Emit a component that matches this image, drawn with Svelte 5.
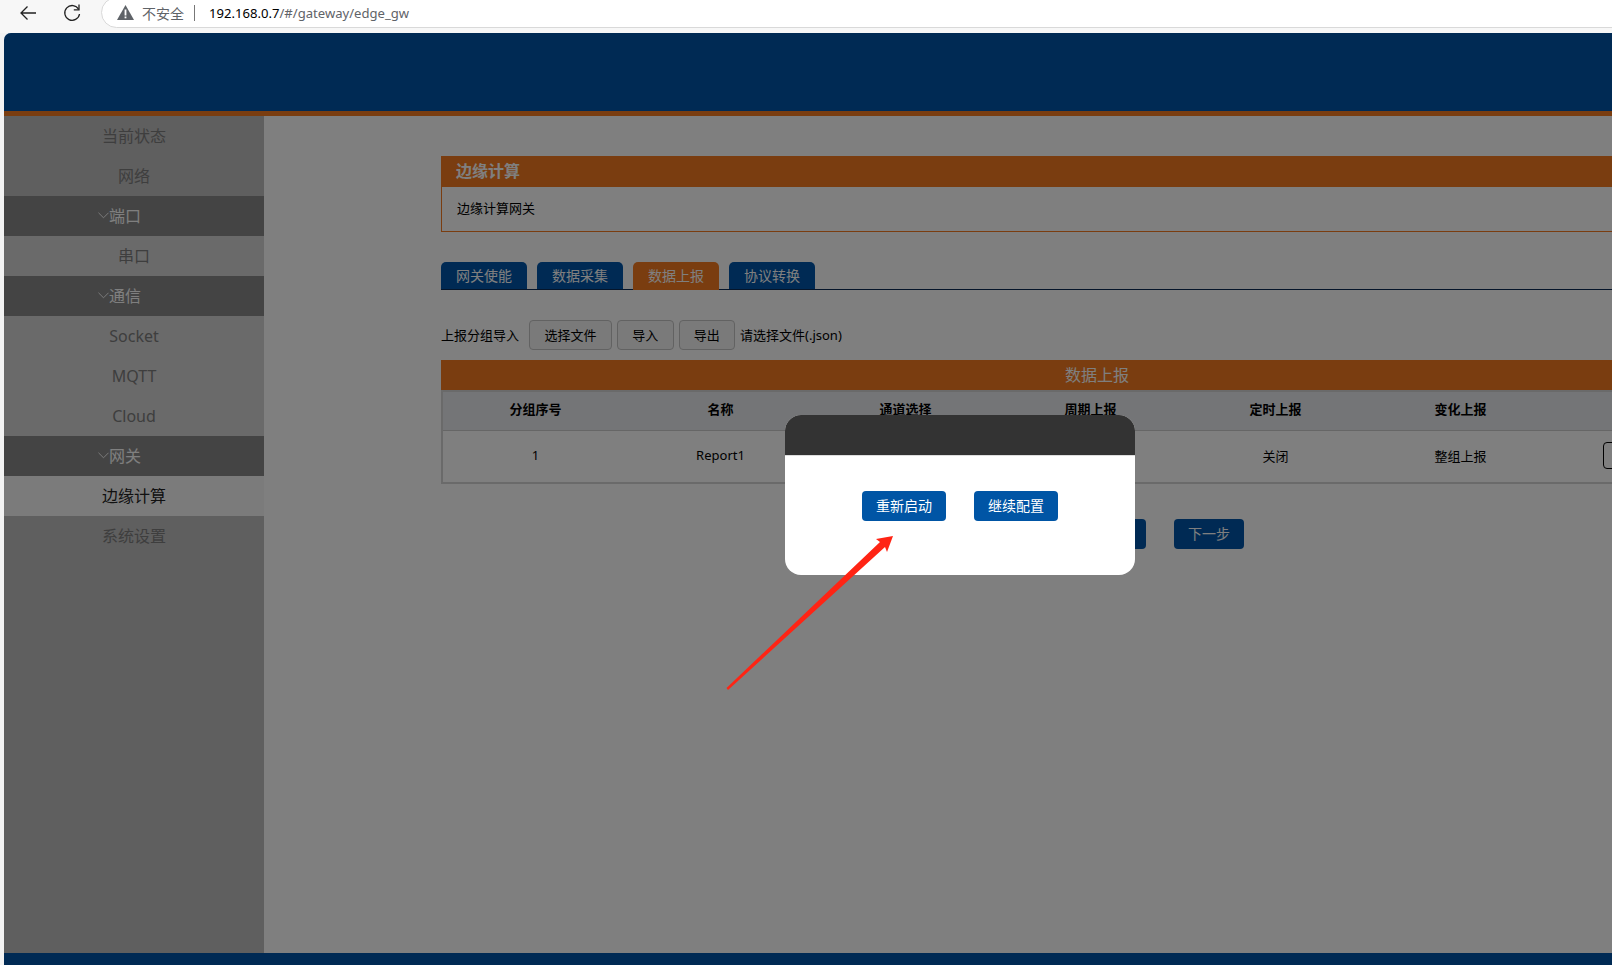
<script>
  const navItems = [
    { label: "当前状态", kind: "lead" },
    { label: "网络", kind: "lead" },
    { label: "端口", kind: "group" },
    { label: "串口", kind: "sub" },
    { label: "通信", kind: "group" },
    { label: "Socket", kind: "sub latin" },
    { label: "MQTT", kind: "sub latin" },
    { label: "Cloud", kind: "sub latin" },
    { label: "网关", kind: "group" },
    { label: "边缘计算", kind: "active" },
    { label: "系统设置", kind: "lead" },
  ];
  const tabs = ["网关使能", "数据采集", "数据上报", "协议转换"];
  const activeTab = "数据上报";
  const columns = ["分组序号", "名称", "通道选择", "周期上报", "定时上报", "变化上报", "操作"];
  const row = ["1", "Report1", "串口1", "开启", "关闭", "整组上报"];
</script>

<div class="browser">
  <svg class="nav-icon back" viewBox="0 0 20 20" width="20" height="20">
    <path d="M18 10H3M9.5 3.5 3 10l6.5 6.5" fill="none" stroke="#222" stroke-width="1.3" />
  </svg>
  <svg class="nav-icon reload" viewBox="0 0 20 20" width="20" height="20">
    <path d="M16.6 6.2A7.4 7.4 0 1 0 17.5 11" fill="none" stroke="#222" stroke-width="1.3" />
    <path d="M17 1.6v5.2h-5.2" fill="none" stroke="#222" stroke-width="1.3" />
  </svg>
  <div class="address">
    <svg viewBox="0.5 0.5 17 15" width="17" height="15">
      <path d="M9 0.5 17.5 15.5H0.5Z" fill="#5f6368" />
      <rect x="8.1" y="5" width="1.8" height="6" fill="#fff" />
      <rect x="8.1" y="12" width="1.8" height="1.8" fill="#fff" />
    </svg>
    <span class="insecure">不安全</span>
    <span class="sep"></span>
    <span class="url"><b>192.168.0.7</b>/#/gateway/edge_gw</span>
  </div>
</div>

<div class="app">
  <header class="top"></header>
  <div class="main">
    <nav class="side">
      {#each navItems as item}
        <div class="item {item.kind}">
          {#if item.kind === "group"}
            <svg viewBox="0 0 12 7" width="11" height="7">
              <path d="M0.5 0.5 6 6l5.5-5.5" fill="none" stroke="#fff" stroke-width="1" />
            </svg>
          {/if}
          {item.label}
        </div>
      {/each}
    </nav>

    <section class="content">
      <div class="panel">
        <div class="card">
          <h2>边缘计算</h2>
          <p>边缘计算网关</p>
        </div>

        <div class="tabs">
          {#each tabs as t}
            <button class="tab" class:on={t === activeTab}>{t}</button>
          {/each}
        </div>

        <div class="toolbar">
          <span class="import-label">上报分组导入</span>
          <button class="plain file">选择文件</button>
          <button class="plain">导入</button>
          <button class="plain">导出</button>
          <span class="hint">请选择文件(.json)</span>
        </div>

        <div class="table-title">数据上报</div>
        <table>
          <thead>
            <tr>
              {#each columns as c}<th>{c}</th>{/each}
            </tr>
          </thead>
          <tbody>
            <tr>
              {#each row as v}<td>{v}</td>{/each}
              <td class="ops"><button class="edit">编辑分组</button></td>
            </tr>
          </tbody>
        </table>

        <div class="steps">
          <button class="step">上一步</button>
          <button class="step">下一步</button>
        </div>
      </div>
    </section>
  </div>
  <footer class="bottom"></footer>

  <div class="overlay"></div>
  <div class="dialog">
    <div class="dialog-head"></div>
    <div class="dialog-body">
      <button class="primary">重新启动</button>
      <button class="primary">继续配置</button>
    </div>
  </div>
  <svg class="arrow" viewBox="0 0 180 165" width="180" height="165">
    <path d="M0.5 156 L154 10 L150 7 L167 4 L161 20 L159 15 L2 158 Z" fill="#ff2414" />
  </svg>
</div>

<style>
  :global(body) {
    background: #f3f3f3;
    overflow: hidden;
    font-family: "Noto Sans", "Noto Sans CJK SC", sans-serif;
  }
  .browser {
    height: 33px;
    background: #f7f7f7;
    display: flex;
    align-items: flex-start;
    overflow: hidden;
    position: relative;
  }
  .nav-icon {
    flex: none;
    margin-top: 3px;
  }
  .back {
    margin-left: 18px;
  }
  .reload {
    margin-left: 24px;
  }
  .address {
    margin: -3px 0 0 19px;
    height: 31px;
    width: 1600px;
    flex: none;
    background: #fff;
    border: 1px solid #d9d9d9;
    border-radius: 16px;
    display: flex;
    align-items: center;
    padding-left: 15px;
    box-sizing: border-box;
    font-size: 14px;
  }
  .insecure {
    color: #5f6368;
    margin-left: 8px;
  }
  .sep {
    width: 1px;
    height: 16px;
    background: #777;
    margin: 0 14px 0 10px;
  }
  .url {
    color: #5f6368;
    font-size: 13.1px;
  }
  .url b {
    color: #000;
    font-weight: 400;
  }

  .app {
    margin-left: 4px;
    height: 932px;
    display: flex;
    flex-direction: column;
    border-radius: 7px 0 0 0;
    overflow: hidden;
    position: relative;
    background: #fff;
  }
  .top {
    height: 78px;
    flex: none;
    background: #0055a8;
    border-bottom: 5px solid #f47a20;
  }
  .main {
    flex: 1;
    display: flex;
    min-height: 0;
  }
  .side {
    width: 260px;
    flex: none;
    background: #bebebe;
  }
  .item {
    height: 40px;
    box-sizing: border-box;
    padding-bottom: 2px;
    display: flex;
    align-items: center;
    justify-content: center;
    font-size: 16px;
    color: #7c7c7c;
  }
  .item.group {
    background: #888;
    color: #fff;
    padding-right: 29px;
  }
  .item.sub {
    background: #d4d4d4;
  }
  .item.latin {
    padding-bottom: 0;
  }
  .item.active {
    background: #f6f6f6;
    color: #222;
  }
  .content {
    flex: 1;
    padding: 40px 0 0 177px;
    min-width: 0;
    background: #fff;
  }
  .panel {
    width: 1312px;
  }
  .card {
    border: 1px solid #f47a20;
  }
  .card h2 {
    margin: -1px -1px 0;
    height: 31px;
    line-height: 31px;
    padding-left: 15px;
    background: #f47a20;
    color: #fff;
    font-size: 16px;
    font-weight: 700;
  }
  .card p {
    margin: 0;
    height: 44px;
    line-height: 42px;
    padding-left: 15px;
    font-size: 13px;
    color: #000;
  }
  .tabs {
    margin-top: 30px;
    display: flex;
    gap: 10px;
    border-bottom: 1px solid #0a2a55;
  }
  .tab {
    width: 86px;
    height: 27px;
    padding: 0 0 2px;
    border: 0;
    border-radius: 5px 5px 0 0;
    background: #0055a8;
    color: #fff;
    font: inherit;
    font-size: 14px;
    margin-bottom: -1px;
  }
  .tab.on {
    background: #f47a20;
    height: 28px;
    padding-bottom: 3px;
  }
  .toolbar {
    margin-top: 30px;
    display: flex;
    align-items: center;
    height: 30px;
    font-size: 13px;
    line-height: 28px;
    color: #000;
  }
  .import-label {
    margin-right: 10px;
    padding-bottom: 1px;
  }
  .hint {
    padding-bottom: 1px;
  }
  .plain {
    height: 30px;
    width: 56.5px;
    padding: 0 0 2px;
    margin-right: 5px;
    border: 1px solid #c4c4c4;
    border-radius: 4px;
    background: #f4f4f4;
    color: #000;
    font: inherit;
    font-size: 13px;
  }
  .plain.file {
    width: 83px;
  }
  .table-title {
    margin-top: 10px;
    height: 30px;
    line-height: 30px;
    text-align: center;
    background: #f47a20;
    color: #fff;
    font-size: 16px;
  }
  table {
    width: 100%;
    border: 2px solid #d4d4d4;
    border-spacing: 0;
    table-layout: fixed;
    font-size: 13px;
    color: #000;
  }
  th,
  td {
    width: 185px;
    text-align: center;
    padding: 0 0 3px;
    font-weight: 400;
  }
  th:last-child,
  td:last-child {
    width: auto;
  }
  th {
    height: 33px;
    padding-bottom: 5px;
    font-weight: 700;
    background: #e9eaee;
    border-bottom: 1px solid #ccc;
  }
  td {
    height: 48px;
  }
  td.ops {
    text-align: left;
    padding-left: 50px;
  }
  .edit {
    width: 86px;
    height: 27px;
    padding: 0;
    background: #fff;
    border: 1px solid #000;
    border-radius: 4px;
    font: inherit;
    font-size: 13px;
  }
  .steps {
    margin: 35px 0 0 635px;
    display: flex;
    gap: 28px;
  }
  .step {
    width: 70px;
    height: 30px;
    padding: 0 0 2px;
    border: 0;
    border-radius: 4px;
    background: #0055a8;
    color: #fff;
    font: inherit;
    font-size: 14px;
  }
  .bottom {
    height: 12px;
    flex: none;
    background: #0055a8;
  }
  .overlay {
    position: absolute;
    inset: 0;
    background: rgba(0, 0, 0, 0.5);
  }
  .dialog {
    position: absolute;
    left: 781px;
    top: 382px;
    width: 350px;
    height: 160px;
    border-radius: 16px;
    overflow: hidden;
    background: #fff;
  }
  .dialog-head {
    height: 40px;
    background: #333;
    border-bottom: 1px solid #ddd;
  }
  .dialog-body {
    display: flex;
    justify-content: center;
    gap: 28px;
    padding-top: 35px;
  }
  .primary {
    width: 84px;
    height: 30px;
    padding: 0 0 2px;
    border: 0;
    border-radius: 4px;
    background: #0055a5;
    color: #fff;
    font: inherit;
    font-size: 14px;
  }
  .arrow {
    position: absolute;
    left: 722px;
    top: 499px;
  }
</style>
